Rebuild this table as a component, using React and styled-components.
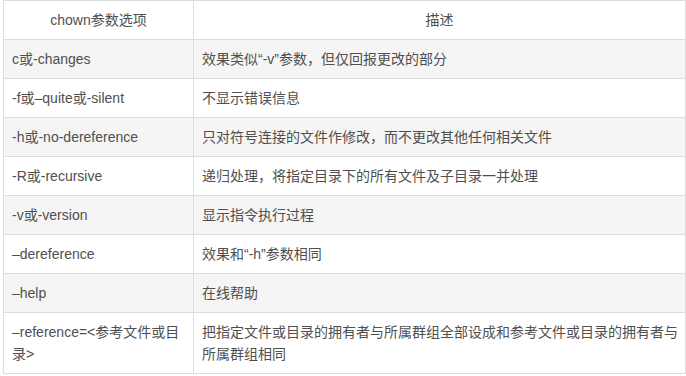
import styled, { createGlobalStyle } from "styled-components";

const GlobalStyle = createGlobalStyle`
body {
    margin: 0;
    background: #fff;
    font-family: "Liberation Sans", Arial, "Noto Sans CJK SC", sans-serif;
}
`;

const rows = [
    ["c或-changes", "效果类似“-v”参数，但仅回报更改的部分"],
    ["-f或–quite或-silent", "不显示错误信息"],
    ["-h或-no-dereference", "只对符号连接的文件作修改，而不更改其他任何相关文件"],
    ["-R或-recursive", "递归处理，将指定目录下的所有文件及子目录一并处理"],
    ["-v或-version", "显示指令执行过程"],
    ["–dereference", "效果和“-h”参数相同"],
    ["–help", "在线帮助"],
    ["–reference=<参考文件或目录>", "把指定文件或目录的拥有者与所属群组全部设成和参考文件或目录的拥有者与所属群组相同"],
];

export default function App() {
    return (
        <>
            <GlobalStyle />
            <Wrapper>
                <Table>
                    <colgroup>
                        <col style={{ width: 190 }} />
                        <col />
                    </colgroup>
                    <thead>
                        <tr>
                            <Th>chown参数选项</Th>
                            <Th>描述</Th>
                        </tr>
                    </thead>
                    <tbody>
                        {rows.map(([opt, desc], i) => (
                            <Row key={i} $striped={i % 2 === 0}>
                                <Td>{opt}</Td>
                                <Td>{desc}</Td>
                            </Row>
                        ))}
                    </tbody>
                </Table>
            </Wrapper>
        </>
    );
}

const Wrapper = styled.div`
padding-left: 3px;
width: 683px;
`;

const Table = styled.table`
width: 683px;
border-collapse: collapse;
table-layout: fixed;
font-size: 14px;
line-height: 22px;
color: #4f4f4f;
`;

const Th = styled.th`
font-weight: normal;
text-align: center;
padding: 8px;
border: 1px solid #ddd;
background: #fff;
`;

const Row = styled.tr`
background: ${(p) => (p.$striped ? "#f5f5f5" : "#fff")};
`;

const Td = styled.td`
padding: 8px 4px 8px 8px;
border: 1px solid #ddd;
vertical-align: middle;
word-break: break-all;
`;
